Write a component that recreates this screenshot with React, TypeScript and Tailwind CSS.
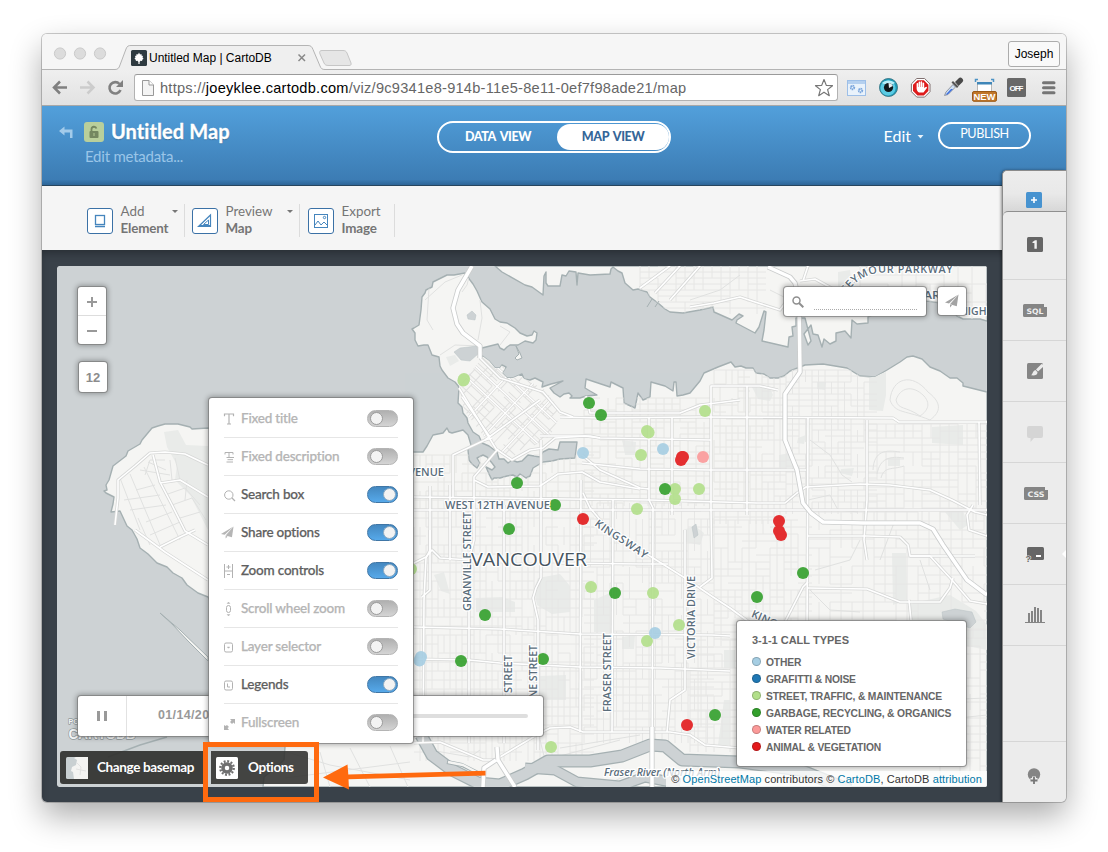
import React from "react";

/* ---------- Map geometry ---------- */

const MAIN_LAND =
  "M414 452L423 452L427 446L433 435L443 433L447 428L449 432L452 433L463 430L468 435L471 445L468 450L469 460L472 464L477 468L480 463L477 458L483 455L487 457L492 463L495 467L492 470L486 467L489 474L492 480L494 478L500 478L507 476L513 475L517 477L520 474L526 478L530 476L533 468L543 462L552 461L560 459L575 458L577 442L560 442L558 450L549 449L543 452L540 457L528 455L522 461L517 462L512 460L508 463L504 459L499 459L497 452L489 446L482 443L479 436L473 432L468 423L467 418L463 413L462 407L458 403L459 387L455 382L448 378L442 370L440 366L439 357L432 355L428 345L424 345L418 346L415 340L415 333L412 329L414 328L419 325L421 310L422 297L425 293L426 290L432 287L433 282L447 275L454 275L465 273L470 280L473 284L477 291L481 300L482 302L490 309L495 319L500 322L507 323L515 328L520 333L527 336L532 335L534 331L537 333L536 340L533 343L525 341L518 345L510 345L507 347L504 350L500 348L498 344L490 346L482 348L481 355L489 361L495 368L500 368L502 365L506 367L502 373L507 378L513 378L522 374L524 379L530 380L535 378L543 382L542 387L551 384L563 381L550 388L554 393L560 397L564 394L569 393L572 396L570 398L580 398L586 396L597 395L590 391L585 388L586 379L610 387L611 382L623 388L624 403L635 408L638 393L643 400L650 397L651 382L665 386L673 391L674 382L676 382L677 396L683 395L690 393L695 387L700 381L704 373L718 367L731 362L735 367L741 366L746 368L753 368L756 373L764 374L770 378L778 378L784 376L790 371L800 367L805 365L823 364L847 368L860 376L875 377L887 370L900 362L907 357L913 356L922 359L930 367L940 371L950 378L957 378L963 383L963 386L975 389L987 392L987 787L263 787L264 777L273 770L284 760L285 747L285 740L208 597L198 593L187 585L182 578L173 573L167 567L157 563L148 554L140 548L137 539L132 530L127 526L120 511L111 512L113 504L114 497L106 493L104 491L107 490L106 485L109 480L113 466L126 456L128 451L140 444L142 440L152 428L158 426L165 424L178 424L190 427L192 429L208 428L250 440Z";

const NORTH_LAND =
  "M495 266L502 272L525 285L532 287L543 295L544 276L546 272L546 283L548 286L560 286L562 275L566 276L569 271L576 272L577 285L578 273L590 275L610 274L611 269L613 267L618 271L622 273L625 283L633 290L638 289L647 292L650 297L658 303L665 309L670 312L683 313L700 310L713 307L714 312L732 320L739 314L743 316L737 320L736 323L755 333L759 327L764 311L766 312L764 330L762 341L788 347L789 337L793 336L792 327L796 326L796 318L805 318L811 341L808 345L804 334L811 325L813 334L818 335L822 347L824 339L830 344L836 341L836 333L845 331L851 338L852 320L857 324L868 323L868 317L890 306L927 301L948 304L957 316L963 319L980 319L987 321L987 266Z";

const LAND = MAIN_LAND + NORTH_LAND;

const PARKS = [
  "M164 432L178 430L186 445L208 446L208 530L190 495L175 480L177 465L167 447Z",
  "M446 357L455 355L459 361L450 366Z",
  "M538 578L560 574L570 586L570 612L552 614L537 605L534 590Z",
  "M476 598L502 597L515 602L515 612L476 612Z",
  "M540 676L566 675L566 700L540 700Z",
  "M594 600L612 592L612 632L594 632Z",
  "M622 637L635 635L634 649L622 649Z",
  "M434 575L444 572L450 594L441 591Z",
  "M752 387L770 388L773 395L770 401L758 399Z",
  "M869 378L886 372L886 395L883 411L869 410Z",
  "M932 427L963 425L963 445L932 443Z",
  "M779 455L790 453L793 468L779 468Z",
  "M798 438L806 435L804 444L797 443Z",
  "M817 382L826 382L825 390L817 389Z",
  "M888 458L900 458L900 466L888 466Z",
  "M841 469L854 468L852 476L840 473Z",
  "M892 553L906 553L907 600L893 605Z",
  "M909 604L950 595L976 611L987 625L987 650L938 640L910 625Z",
  "M945 512L962 508L968 525L960 530Z",
  "M724 700L730 700L730 745L718 745Z",
  "M683 530L695 526L704 533L700 545L685 542Z",
  "M838 272L850 270L852 290L838 292Z",
  "M622 440L636 442L635 455L625 455Z",
  "M724 650L735 650L735 668L724 668Z",
];

const MAJOR = [
  "M414 497L650 500L757 503L785 503L797 493L806 487L860 484L890 485L930 490L952 500L975 512L987 515",
  "M414 510L987 510",
  "M430 486L430 550L426 558L424 600L423 743",
  "M450 485L450 560",
  "M453 497L453 455L485 440L492 438",
  "M469 743L469 560L474 540L474 477L498 449",
  "M504 743L504 505",
  "M538 750L538 620L533 598L536 588L541 578L541 440",
  "M580 732L581 480",
  "M612 732L613 500",
  "M652 787L653 508L649 500L649 418",
  "M672 500L672 418M672 440L672 515",
  "M685 530L685 690L670 700L667 732",
  "M711 510L711 386L760 386L778 390",
  "M747 515L747 386",
  "M807 640L808 418",
  "M867 560L864 540L867 500L867 420",
  "M980 505L979 422",
  "M560 417L600 418L700 417L893 418L899 422L987 422",
  "M540 436L590 436L600 438L711 440",
  "M582 463L640 469L711 470L806 470",
  "M582 455L600 470L640 488L649 489",
  "M414 627L500 629L580 634L712 635L730 636",
  "M414 659L469 660L500 663L580 667L660 668L730 671",
  "M414 563L426 557L432 550L440 558L470 560M560 563L640 564L668 564",
  "M414 743L440 742L483 760L495 760L540 733L550 728L570 727L583 732L670 732L690 735L705 745L740 748",
  "M583 493L590 508L602 522L645 553L685 578L713 597L730 608L760 630",
  "M485 440L540 400M459 388L496 449L512 460L530 450L543 448L555 438L585 436L600 438",
  "M462 397L490 437M480 358L500 378L543 392L560 412L573 417",
  "M474 480L488 487L540 486L558 474L582 472L600 482L640 489",
  "M586 396L590 413L680 413L700 405L740 400",
  "M700 587L712 578L711 510",
  "M783 626L803 587L808 582",
  "M808 536L867 536L900 537L908 545L910 556L975 556M808 588L867 589L880 594L900 602L940 602L950 588L953 578",
  "M910 556L930 556L952 580L970 601L987 604M909 600L911 620",
  "M690 307L714 303L740 297L755 302L780 310L786 302",
  "M640 288L670 266M655 293L680 266M670 300L700 266",
  "M800 281L815 279L835 290L850 285L870 266M803 281L808 266",
  "M973 505L967 515L969 530L987 536",
  "M115 525L118 498L118 480L135 466L150 453L165 452L185 454L208 465",
  "M153 455L160 482L172 505L185 531L208 545M160 483L180 480L208 497",
  "M422 597L430 590L430 530",
  "M135 530L165 552L208 580M160 547L180 537L195 530",
];

const HIGHWAYS = [
  "M768 267L790 277L795 283L799 300L800 372L785 394L785 440L797 470L803 503L811 513L823 522L863 523L920 523L933 529L943 545L967 580L987 595",
  "M472 266L458 290L453 308L457 324L463 333L480 346L480 358",
  "M497 747L498 760L515 787M483 787L484 768L496 760",
  "M652 727L652 787",
];

const DETAIL_ROADS = [
  "M429 288L427 320L433 330M440 355L455 345L480 346M425 300L445 282L462 275",
  "M480 300L482 318L478 340M500 326L510 332L500 345M470 273L467 285L462 292",
  "M890 400C892 378 912 372 928 392C945 405 938 414 930 420C906 410 895 414 890 400Z",
  "M896 400C900 388 912 384 924 396C932 405 926 412 920 416C906 406 898 410 896 400Z",
  "M873 470C874 450 886 450 900 452M877 474C880 458 890 456 904 458M881 478C884 466 892 470 904 466",
  "M810 440L830 455L842 475L852 482M808 500L830 495L838 510L858 512",
  "M690 300L720 290L740 275M770 290L790 300M830 290L835 300M890 302L930 300",
  "M280 750L330 765L410 780M320 752L330 787M350 748L370 787M390 746L408 787M285 778L410 762",
  "M430 750L470 757L480 750M540 740L545 760L620 740M560 748L640 735",
  "M810 590L830 610L860 612M815 570L850 560L860 540M880 560L895 520M920 560L930 590",
  "M936 700L987 698M940 720L987 715M945 690L950 740M600 787L640 770M750 770L820 775",
  "M145 475L150 460L165 460M148 462L166 470M140 470L170 475M136 490L155 485M124 500L160 495M130 510L166 505",
  "M170 460L172 480M175 458L180 480M120 478L140 530M130 474L160 545M144 467L180 540M185 500L187 480",
  "M165 495L185 488L200 505M172 505L192 498L206 520M180 518L200 512M146 522L172 512M150 535L180 522M138 518L150 545",
];

function noise(n: number) {
  const s = Math.sin(n * 127.1 + 11.7) * 43758.5453;
  return s - Math.floor(s);
}

type Block = [number, number, number, number, number, number];
/* x, y, width, height, column step, row step */
const BLOCKS: Block[] = [
  [414, 455, 170, 300, 6, 9],
  [584, 398, 128, 105, 8, 6],
  [584, 503, 128, 230, 6.5, 8],
  [714, 370, 70, 150, 6, 7],
  [714, 520, 90, 125, 7, 7],
  [786, 370, 82, 135, 6.5, 6],
  [868, 424, 114, 86, 9, 7],
  [808, 512, 178, 118, 11, 9],
  [940, 630, 47, 140, 10, 8],
  [690, 640, 50, 110, 8, 7],
  [640, 266, 125, 45, 9, 6],
  [860, 266, 127, 50, 14, 9],
];

function streets(b: Block, seed: number) {
  const [x, y, w, h, cs, rs] = b;
  let d = "";
  let k = seed * 1000;
  for (let cx = x; cx < x + w; cx += cs) {
    for (let cy = y; cy < y + h; cy += rs * 2) {
      k++;
      if (noise(k) > 0.25) d += `M${cx.toFixed(1)} ${cy.toFixed(1)}v${rs * 2}`;
    }
  }
  for (let cy = y; cy < y + h; cy += rs) {
    for (let cx = x; cx < x + w; cx += cs * 2) {
      k++;
      if (noise(k) > 0.22) d += `M${cx.toFixed(1)} ${cy.toFixed(1)}h${cs * 2}`;
    }
  }
  return d;
}

const GRID = BLOCKS.map((b, i) => streets(b, i + 1)).join("");
const DOWNTOWN = streets([-60, -60, 120, 120, 8, 7], 31);
const DOWNTOWN_AVENUES = "M-60 -21H60M-60 -7H60M-60 7H60M-24 -60V60M0 -60V60M24 -60V60";

const BLUE = "#a6cee3";
const LIGHT = "#b2df8a";
const GREEN = "#33a02c";
const PINK = "#fb9a99";
const RED = "#e31a1c";

const CALLS: [number, number, string][] = [
  [464, 379, LIGHT], [463.4, 380.4, LIGHT], [589, 403, GREEN], [601, 415, GREEN], [647, 431, LIGHT], [648.6, 432.6, LIGHT],
  [641, 455, LIGHT], [705, 411, LIGHT], [663, 449, BLUE], [583, 453, BLUE], [703, 457, PINK],
  [682, 457, RED], [681, 460, RED], [683, 457, RED], [675, 489, LIGHT], [675, 499, LIGHT], [665, 489, GREEN],
  [699, 489, LIGHT], [637, 509, LIGHT], [583, 519, RED], [517, 483, GREEN], [555, 505, GREEN], [509, 529, GREEN],
  [591, 587, LIGHT], [615, 593, GREEN], [653, 593, LIGHT], [679, 625, LIGHT], [647, 641, LIGHT],
  [655, 633, BLUE], [485, 615, GREEN], [461, 661, GREEN], [543, 659, GREEN], [421, 657, BLUE], [419.5, 660.5, BLUE],
  [551, 747, LIGHT], [687, 725, RED], [715, 715, GREEN], [779, 521, RED], [779, 531, RED],
  [781, 535, RED], [803, 573, GREEN], [757, 597, GREEN], [411, 569, LIGHT],
];

function Label({ x, y, r = 0, size = 11, len, children }: { x: number; y: number; r?: number; size?: number; len?: number; children: string }) {
  return (
    <text
      x={x}
      y={y}
      fontSize={size}
      textLength={len}
      lengthAdjust="spacingAndGlyphs"
      transform={r ? `rotate(${r} ${x} ${y})` : undefined}
    >
      {children}
    </text>
  );
}

function CityMap() {
  return (
    <svg className="block h-full w-full rounded-[2px]" viewBox="57 266 930 521">
      <defs>
        <clipPath id="land">
          <path d={LAND} />
        </clipPath>
        <clipPath id="core">
          <path d="M459 386L484 356L545 390L562 412L550 436L512 459L488 442L464 410Z" />
        </clipPath>
        <path id="kingsway" d="M594 525L606 534Q626 545 648 562" />
        <path id="parkway" d="M846 294Q860 273 884 272.500L987 272.500" />
        <path id="kingsway2" d="M751 617Q765 622 785 634" />
      </defs>
      <rect x="57" y="266" width="930" height="521" fill="#cdd2d4" />
      <path d={LAND} fill="#f5f5f3" stroke="#a5b0b2" strokeWidth="1.4" strokeLinejoin="round" />
      <g clipPath="url(#land)">
        <g fill="#e9ebe9">
          {PARKS.map((d) => (
            <path key={d} d={d} />
          ))}
        </g>
        <path d={GRID} stroke="#e5e5e4" strokeWidth="0.9" fill="none" />
        <g clipPath="url(#core)">
          <path d="M455 350h115v115h-115z" fill="#f5f5f3" />
          <g transform="translate(510 408) rotate(43)" fill="none">
            <path d={DOWNTOWN} stroke="#e0e0df" strokeWidth="1" />
            <path d={DOWNTOWN_AVENUES} stroke="#dcdcdb" strokeWidth="2.6" />
            <path d={DOWNTOWN_AVENUES} stroke="#fff" strokeWidth="1.3" />
          </g>
        </g>
        <g fill="none" stroke="#e0e1e0" strokeWidth="1">
          {DETAIL_ROADS.map((d) => (
            <path key={d} d={d} />
          ))}
        </g>
      </g>

      {/* Lakes, reservoirs and harbour details */}
      <g fill="#cdd2d4" stroke="#b9c2c4" strokeWidth="0.5">
        <path d="M454 352L460 348L477 346L478 354L470 361L461 360Z" />
        <path d="M467 315L472 311L476 315L475 320L468 319Z" />
        <path d="M942 612L955 609L972 612L976 622L970 628L958 624L943 619Z" />
        <path d="M692 527L696 524L698 535L694 538Z" />
      </g>
      <path d="M516 346L520 353L522 358L517 360L515 358L519 354Z" fill="#f5f5f3" stroke="#a5b0b2" />
      <g stroke="#a5b0b2" fill="none" strokeWidth="1">
        <path d="M160 613L180 630L208 657L208 661L188 641L172 624Z" fill="#f5f5f3" />
        <path d="M108 757L140 745L167 737" strokeWidth="1.4" />
        <path d="M647 307L652 299M655 307L659 301" />
      </g>

      {/* River */}
      <g fill="none" strokeLinejoin="round">
        <g stroke="#a5b0b2">
          <path d="M421 735L432 755L452 770L478 783L500 785L525 774L548 761L590 761L622 756L650 745L665 746L682 760L740 762L800 770L850 790" strokeWidth="13" />
          <path d="M525 768L555 770L577 782L620 786L645 777L680 784" strokeWidth="11" />
        </g>
        <g stroke="#cdd2d4">
          <path d="M421 735L432 755L452 770L478 783L500 785L525 774L548 761L590 761L622 756L650 745L665 746L682 760L740 762L800 770L850 790" strokeWidth="10.5" />
          <path d="M525 768L555 770L577 782L620 786L645 777L680 784" strokeWidth="8.5" />
        </g>
        <path d="M447 762L462 765L482 775" stroke="#a5b0b2" strokeWidth="4" />
        <path d="M448 762L463 765L480 774" stroke="#f5f5f3" strokeWidth="2.4" />
      </g>

      {/* Arterials and highways */}
      <g fill="none" strokeLinejoin="round">
        <g stroke="#d7d8d7" strokeWidth="3.2">
          {MAJOR.map((d) => (
            <path key={d} d={d} />
          ))}
        </g>
        <g stroke="#ffffff" strokeWidth="1.6">
          {MAJOR.map((d) => (
            <path key={d} d={d} />
          ))}
        </g>
        <g stroke="#cbcdcd" strokeWidth="5.2">
          {HIGHWAYS.map((d) => (
            <path key={d} d={d} />
          ))}
        </g>
        <g stroke="#ffffff" strokeWidth="3.5">
          {HIGHWAYS.map((d) => (
            <path key={d} d={d} />
          ))}
        </g>
      </g>

      <g opacity="0.9">
        {CALLS.map(([x, y, c], i) => (
          <circle key={i} cx={x} cy={y} r="6" fill={c} />
        ))}
      </g>

      <g
        fill="#5a6d7b"
        stroke="#ffffff"
        strokeWidth="2.4"
        strokeLinejoin="round"
        paintOrder="stroke"
        className="font-['Open_Sans',sans-serif] font-semibold"
      >
        <Label x={371} y={475.5} len={73}>12TH AVENUE</Label>
        <Label x={445} y={509} len={105}>WEST 12TH AVENUE</Label>
        <Label x={470.5} y={611} r={-90} len={99}>GRANVILLE STREET</Label>
        <Label x={511.5} y={693} r={-90} len={38}>STREET</Label>
        <Label x={537} y={718} r={-90} len={73}>MAINE STREET</Label>
        <Label x={611} y={712} r={-90} len={79}>FRASER STREET</Label>
        <Label x={695} y={659} r={-90} len={83}>VICTORIA DRIVE</Label>
        <text fontSize="10.8">
          <textPath href="#kingsway" textLength="61">KINGSWAY</textPath>
        </text>
        <text fontSize="10.8">
          <textPath href="#kingsway2">KINGSWAY</textPath>
        </text>
        <text fontSize="10.8">
          <textPath href="#parkway" textLength="114">SEYMOUR PARKWAY</textPath>
        </text>
        <Label x={916} y={299} len={32}>PARK</Label>
        <Label x={960} y={315} len={26.5}>HIGH</Label>
        <text x="471" y="566" fontSize="17.5" fill="#47555f" textLength="116" lengthAdjust="spacingAndGlyphs" className="font-medium">
          VANCOUVER
        </text>
        <text x="604" y="775.5" fontSize="10" fontStyle="italic" textLength="116" lengthAdjust="spacingAndGlyphs">
          Fraser River (North Arm)
        </text>
      </g>
    </svg>
  );
}

/* ---------- Browser chrome ---------- */

function TabStrip() {
  return (
    <div className="relative h-[36px] shrink-0 bg-[#f6f6f6]">
      <svg className="absolute left-0 top-0 h-[36px] w-[1024px]" viewBox="0 0 1024 36" fill="none">
        <path d="M0 35.5H73C76 35.5 77 34 78 31L84 15C85 12 86.500 11.500 89 11.500H266C269 11.500 270 13 271 15.500L278 32C279 34.500 280 35.500 283 35.500H1024V36H0Z" fill="#efefef" />
        <path d="M0 35.5H73C76 35.5 77 34 78 31L84 15C85 12 86.500 11.500 89 11.500H266C269 11.500 270 13 271 15.500L278 32C279 34.500 280 35.500 283 35.500H1024" stroke="#b4b4b4" />
        <path d="M278 20C277 17.500 278 16.500 280 16.500H301C303 16.500 304 17 305 19L309 29C309.500 31 308.500 31.500 307 31.500H287C284 31.500 283 31 282 29Z" fill="#e6e6e6" stroke="#c6c6c6" />
        <g fill="#dcdcdc" stroke="#cacaca">
          <circle cx="18" cy="19.500" r="5.600" />
          <circle cx="38" cy="19.500" r="5.600" />
          <circle cx="58" cy="19.500" r="5.600" />
        </g>
        <rect x="89" y="16" width="16" height="16" rx="1.500" fill="#2e3a40" />
        <path d="M97 18.500L98 20.500L99.500 20L99.500 21.500L101 22L100.500 23.500L101.500 24.500L100.500 25.500L100 27L98.500 26.800L97.600 28V30H96.400V28L95.500 26.800L94 27L93.500 25.500L92.500 24.500L93.500 23.500L93 22L94.500 21.500L94.500 20L96 20.500Z" fill="#fff" />
        <path d="M256.500 20.500L263 27M263 20.500L256.500 27" stroke="#888" strokeWidth="1.500" />
      </svg>
      <div className="relative flex h-full items-center">
        <span className="ml-[107px] mt-[12px] w-[124px] whitespace-nowrap font-['Liberation_Sans',sans-serif] text-[12px] tracking-[-0.02px] text-black">
          Untitled Map | CartoDB
        </span>
        <span className="ml-auto mr-[6px] mt-[3px] flex h-[26px] w-[52px] items-center justify-center rounded-[3px] border border-[#acacac] bg-[#f9f9f9] font-['Liberation_Sans',sans-serif] text-[12px] text-black">
          Joseph
        </span>
      </div>
    </div>
  );
}

function Extensions() {
  return (
    <svg className="h-[35px] w-[228px]" viewBox="838 70 228 35" fill="none">
      <rect x="847.500" y="80.500" width="18" height="15" fill="#e9f2fb" stroke="#9dbfe8" />
      <path d="M848 81h17v3h-17z" fill="#b5d0ef" />
      <circle cx="852.500" cy="87.500" r="1.700" stroke="#7aa5dc" strokeWidth="2" strokeDasharray="1.300 0.500" />
      <circle cx="860.500" cy="90.500" r="1.700" stroke="#7aa5dc" strokeWidth="2" strokeDasharray="1.300 0.500" />
      <circle cx="888.500" cy="87.500" r="9.200" fill="#1f9cb8" />
      <circle cx="888.500" cy="87.500" r="9" stroke="#40717e" strokeWidth="0.800" />
      <circle cx="888" cy="88" r="7.600" fill="#5bcbe4" />
      <path d="M882 83C885 79.500 892 79.500 895 83C891 85 886 85 882 83Z" fill="#b7effa" />
      <circle cx="888.500" cy="87.500" r="4.600" fill="#10181c" />
      <path d="M888.500 82.900A4.600 4.600 0 0 1 892.800 86L889 88Z" fill="#e7eef0" />
      <path d="M916.800 78.500h7.800l5.400 5.400v7.800l-5.400 5.400h-7.800l-5.400-5.400v-7.800Z" fill="#fff" stroke="#807070" strokeWidth="1" />
      <path d="M917.500 80.200h6.400l4.500 4.500v6.400l-4.500 4.500h-6.400l-4.500-4.500v-6.400Z" fill="#dd1b1b" />
      <path d="M916.600 88.500V83.800a.8.8 0 0 1 1.600 0V87h.4V82.300a.8.8 0 0 1 1.600 0V87h.4V82a.8.8 0 0 1 1.600 0V87h.4V83.300a.8.8 0 0 1 1.600 0V88L925.600 87a.8.8 0 0 1 1.100 1.200L923.500 92.500H919C917.500 91.500 916.600 90 916.600 88.500Z" fill="#fff" />
      <path d="M944.500 95.500L946 92L953 84.500L955.500 87L948 94.500Z" fill="#cfe0f5" stroke="#898f99" strokeWidth="0.900" />
      <path d="M945.500 94.800L951 89L953 89L948 94.200Z" fill="#3c6fe0" />
      <path d="M951.500 82.500L953 81L958.500 86.500L957 88Z" fill="#555" />
      <path d="M955 82L958.500 78.500A2.600 2.600 0 0 1 962.300 82.200L958.500 86Z" fill="#4a4a4a" />
      <path d="M975.500 82V79.500H978M991 79.500H993.500V82" stroke="#4d93c5" strokeWidth="1.500" />
      <rect x="977.500" y="82.500" width="14" height="9" fill="#fff" stroke="#b7b7b7" />
      <path d="M977 82h15v2.500h-15z" fill="#3f86b8" />
      <rect x="972.500" y="91.500" width="24" height="9.800" rx="1.500" fill="#c0762a" stroke="#9b5a17" />
      <text x="984.500" y="100" textAnchor="middle" fontSize="9.500" fontWeight="700" fill="#fff" className="font-['Liberation_Sans',sans-serif]" textLength="22" lengthAdjust="spacingAndGlyphs">NEW</text>
      <rect x="1007" y="78" width="19" height="19" rx="1.500" fill="#686868" />
      <text x="1016.500" y="90.800" textAnchor="middle" fontSize="8" fontWeight="700" fill="#fff" className="font-['Liberation_Sans',sans-serif]" textLength="14">OFF</text>
      <path d="M1043.500 82.700h10.500M1043.500 87.700h10.500M1043.500 92.700h10.500" stroke="#757575" strokeWidth="3" strokeLinecap="round" />
    </svg>
  );
}

function AddressBar() {
  return (
    <div className="flex h-[36px] shrink-0 items-start border-b border-[#a8a8a8] bg-gradient-to-b from-[#efefef] to-[#e2e2e2]">
      <svg className="h-[35px] w-[92px]" viewBox="42 70 92 35" fill="none">
        <path d="M67 87.500H54M60 81.500L54 87.500L60 93.500" stroke="#808080" strokeWidth="2.500" />
        <path d="M80 87.500H93.500M87.500 81.500L93.500 87.500L87.500 93.500" stroke="#cccccc" strokeWidth="2.500" />
        <path d="M119.500 84A5.700 5.700 0 1 0 120.500 90" stroke="#808080" strokeWidth="2.600" />
        <path d="M123 80V87H116Z" fill="#808080" />
      </svg>
      <div className="mt-[4px] flex h-[27px] w-[704px] items-center rounded-[3px] border border-[#b2b2b2] border-t-[#9a9a9a] bg-white">
        <svg className="ml-[6px] h-[18px] w-[14px]" viewBox="0 0 14 18" fill="none">
          <path d="M1.500 1.500H8L12.500 6V16.500H1.500Z" fill="#f4f4f4" stroke="#999" />
          <path d="M8 1.500V6H12.500" fill="#fff" stroke="#999" />
        </svg>
        <span className="ml-[5px] mt-[1px] whitespace-nowrap font-['Liberation_Sans',sans-serif] text-[14.6px] leading-none tracking-[0.25px] text-[#666]">
          https://<span className="text-black">joeyklee.cartodb.com</span>/viz/9c9341e8-914b-11e5-8e11-0ef7f98ade21/map
        </span>
        <svg className="ml-auto mr-[3px] h-[20px] w-[20px]" viewBox="0 0 20 20" fill="none">
          <path d="M10 1.500L12.300 7.400L18.500 7.700L13.600 11.600L15.300 17.700L10 14.200L4.700 17.700L6.400 11.600L1.500 7.700L7.700 7.400Z" stroke="#777" strokeWidth="1.200" strokeLinejoin="round" />
        </svg>
      </div>
      <Extensions />
    </div>
  );
}

/* ---------- Application header ---------- */

function Header() {
  return (
    <header className="flex h-[80px] shrink-0 items-start border-b border-[#27455e] bg-gradient-to-b from-[#519ed9] from-5% via-[#3c7cb4] via-93% to-[#2d6597] font-[Lato,sans-serif]">
      <svg className="ml-[16px] mt-[19px] h-[14px] w-[16px]" viewBox="0 0 16 14">
        <path d="M1 6L6.500 1.500V4.500H14.500V13H12V7.500H6.500V10.500Z" fill="#a3cbea" />
      </svg>
      <div className="ml-[10px] mt-[16px] flex h-[20px] w-[20px] items-center justify-center rounded-[3px] bg-[#b9cf9b]">
        <svg className="h-[14px] w-[12px]" viewBox="0 0 12 14" fill="none">
          <path d="M3.500 6V4A2.500 2.500 0 0 1 8.400 3.600" stroke="#748760" strokeWidth="1.800" />
          <rect x="1.500" y="6" width="9" height="7" rx="1" fill="#748760" />
          <path d="M6 8v3" stroke="#a9bf8c" strokeWidth="1.200" />
        </svg>
      </div>
      <div className="-ml-[19px] mt-[11px] w-[300px]">
        <h1 className="ml-[26px] whitespace-nowrap text-[20px] font-bold leading-[28px] tracking-[0.08px] text-white [-webkit-text-stroke:0.3px] [text-shadow:0_1px_1px_rgba(0,0,0,0.25)]">
          Untitled Map
        </h1>
        <p className="mt-[2px] text-[15px] leading-[18px] tracking-[-0.23px] text-[#9ac5e8]">Edit metadata...</p>
      </div>
      <div className="ml-[52px] mt-[15px] flex h-[32px] w-[234px] shrink-0 items-center rounded-full border-2 border-white text-[12.5px] font-black tracking-[-0.4px] [word-spacing:2px]">
        <span className="w-[118px] text-center text-white">DATA VIEW</span>
        <span className="flex h-[26px] w-[112px] items-center justify-center rounded-full bg-white text-[#356698]">MAP VIEW</span>
      </div>
      <div className="ml-auto mr-[35px] mt-[16px] flex items-center">
        <span className="text-[16px] leading-[27px] text-white">Edit</span>
        <svg className="ml-[6px] mt-[2px] h-[4px] w-[7px]" viewBox="0 0 7 4">
          <path d="M0.500 0H6.500L3.500 3.500Z" fill="#e8f2fa" />
        </svg>
        <button className="ml-[14px] h-[27px] w-[93px] rounded-full border-2 border-white pb-[2px] text-[12.6px] leading-none tracking-[-0.4px] text-white">
          PUBLISH
        </button>
      </div>
    </header>
  );
}

function ToolButton({ top, bottom, caret, width, textWidth, children }: { top: string; bottom: string; caret?: boolean; width: string; textWidth: string; children: React.ReactNode }) {
  return (
    <div className={`flex h-[33px] items-start border-r border-[#dcdcdc] ${width}`}>
      <div className="mt-[4px] flex h-[26px] w-[26px] shrink-0 items-center justify-center rounded-[3px] border border-[#3b71a6] bg-white">
        <svg className="h-[16px] w-[16px]" viewBox="0 0 16 16" fill="none" stroke="#4585bd">
          {children}
        </svg>
      </div>
      <div className={`ml-[8px] text-[13.4px] leading-[17px] text-[#757575] ${textWidth}`}>
        <div className="-mt-[1px] -ml-[0.5px]">{top}</div>
        <div className="-ml-[0.5px] font-bold tracking-[-0.15px]">{bottom}</div>
      </div>
      {caret && (
        <svg className="mt-[6px] h-[4px] w-[6px]" viewBox="0 0 6 4">
          <path d="M0 0H6L3 3Z" fill="#777" />
        </svg>
      )}
    </div>
  );
}

function Toolbar() {
  return (
    <div className="flex h-[64px] shrink-0 items-start gap-[7px] bg-[#f5f5f5] pl-[45px] pt-[18px] font-[Lato,sans-serif]">
      <ToolButton top="Add" bottom="Element" caret width="w-[98px]" textWidth="w-[51px]">
        <rect x="3.500" y="2.500" width="9" height="9" strokeWidth="1.300" />
        <path d="M3 13.500h10" strokeWidth="1.300" />
      </ToolButton>
      <ToolButton top="Preview" bottom="Map" caret width="w-[108px]" textWidth="w-[61px]">
        <path d="M13.500 2V13.500H1.500Z" strokeWidth="1.200" />
        <path d="M11.500 7V11.500H6.500Z" />
        <path d="M3 12.500h10" />
      </ToolButton>
      <ToolButton top="Export" bottom="Image" width="ml-[1px] w-[87px]" textWidth="w-[45px]">
        <rect x="1.500" y="1.500" width="13" height="13" />
        <path d="M2 12L5 8L8 12L11 9L14 12" />
        <circle cx="11.500" cy="4.500" r="1.200" />
      </ToolButton>
    </div>
  );
}

/* ---------- Side panel ---------- */

function SideTab({ h, children }: { h: string; children?: React.ReactNode }) {
  return (
    <div className={`flex shrink-0 items-center justify-center border-b border-[#d6d6d6] ${h}`}>{children}</div>
  );
}

function TagIcon({ children }: { children: string }) {
  return (
    <svg className="h-[13px] w-[24px]" viewBox="0 0 24 13">
      <path d="M1.500 0H21V3H24V11.500A1.500 1.500 0 0 1 22.500 13H1.500A1.500 1.500 0 0 1 0 11.500V1.500A1.500 1.500 0 0 1 1.500 0Z" fill="#858585" />
      <text x="12" y="9.500" textAnchor="middle" fontSize="7.500" fontWeight="700" textLength="17" lengthAdjust="spacingAndGlyphs" fill="#f0f0f0" className="font-['DejaVu_Sans',sans-serif]">
        {children}
      </text>
    </svg>
  );
}

function SidePanel() {
  return (
    <aside className="absolute right-0 top-[136px] flex h-[632px] w-[64px] flex-col rounded-tl-[5px] border-l border-t border-[#8b8b8b] bg-[#ececec] shadow-[-1px_0_3px_rgba(0,0,0,0.4)]">
      <div className="flex h-[45px] shrink-0 items-start justify-center rounded-tl-[5px] bg-gradient-to-b from-[#ededed] via-[#e9e9e9] to-[#d2d2d2] pt-[21px]">
        <svg className="mr-[2px] h-[16px] w-[16px]" viewBox="0 0 16 16">
          <rect width="16" height="16" rx="1.500" fill="#4793d0" />
          <path d="M8 5v6M5 8h6" stroke="#fff" strokeWidth="1.600" />
        </svg>
      </div>
      <div className="-mt-[5px] flex grow flex-col rounded-tl-[5px] border-t border-[#8f8f8f] bg-[#ececec]">
        <SideTab h="h-[68px]">
          <svg className="mt-[-3px] h-[15px] w-[16px]" viewBox="0 0 16 15">
            <rect width="16" height="15" rx="1.500" fill="#666" />
            <path d="M5.500 5L8 3.200H9.800V11.800H7.400V6H5.500Z" fill="#f2f2f2" />
          </svg>
        </SideTab>
        <SideTab h="h-[61px]"><TagIcon>SQL</TagIcon></SideTab>
        <SideTab h="h-[61px]">
          <svg className="h-[16px] w-[16px]" viewBox="0 0 16 16">
            <rect width="16" height="16" rx="1.500" fill="#858585" />
            <path d="M16 1.500L14.500 1L9 6.500L11 8.500L16 4Z" fill="#ececec" />
            <path d="M8.500 7L10.500 9.300C10.500 12 8 12.800 4 12.300C6 11 5.500 8 8.500 7Z" fill="#ececec" />
          </svg>
        </SideTab>
        <SideTab h="h-[61px]">
          <svg className="mt-[3px] h-[16px] w-[16px]" viewBox="0 0 16 16">
            <path d="M2 0H14A2 2 0 0 1 16 2V10A2 2 0 0 1 14 12H7L3.500 16V12H2A2 2 0 0 1 0 10V2A2 2 0 0 1 2 0Z" fill="#d5d5d5" />
          </svg>
        </SideTab>
        <SideTab h="h-[61px]"><span className="ml-[2px]"><TagIcon>CSS</TagIcon></span></SideTab>
        <SideTab h="h-[61px] relative">
          <svg className="h-[16px] w-[20px]" viewBox="0 0 20 16">
            <rect x="2" y="1" width="17" height="13" rx="1.500" fill="#666" />
            <path d="M11 9h5v2h-5z" fill="#fff" />
            <text x="0.500" y="15.500" fontSize="9" fontWeight="700" fill="#666" stroke="#ececec" strokeWidth="1.200" paintOrder="stroke" className="font-['Liberation_Sans',sans-serif]">?</text>
          </svg>
          <svg className="absolute right-0 top-[26px] h-[8px] w-[4px]" viewBox="0 0 4 8">
            <path d="M4 0L0 4L4 8Z" fill="#fff" />
          </svg>
        </SideTab>
        <SideTab h="h-[61px]">
          <svg className="h-[16px] w-[20px]" viewBox="0 0 20 16" stroke="#858585" fill="none">
            <path d="M0 15.500H20" />
            <path d="M4 15V6M7 15V4M10 15V0M13 15V1M16 15V3" strokeWidth="2" />
          </svg>
        </SideTab>
        <SideTab h="h-[96px]" />
        <div className="flex grow items-center justify-center">
          <svg className="mt-[7px] mr-[2px] h-[16px] w-[14px]" viewBox="0 0 14 16">
            <circle cx="7" cy="6.500" r="6.200" fill="#858585" />
            <path d="M7 8.500v7.500M3.500 12h7" stroke="#ececec" strokeWidth="4" />
            <path d="M7 9v7M3.500 12.500h7" stroke="#777" strokeWidth="1.800" />
          </svg>
        </div>
      </div>
    </aside>
  );
}

/* ---------- Map overlays ---------- */

const CARD = "bg-white rounded-[3px] shadow-[0_0_0_1px_rgba(120,120,120,0.65),0_0_5px_2px_rgba(0,0,0,0.28)]";

function ZoomControls() {
  return (
    <>
      <div className={`absolute left-[21px] top-[21px] flex h-[57px] w-[28px] flex-col ${CARD}`}>
        <div className="flex flex-1 items-center justify-center border-b border-[#ddd] pt-[1px]">
          <svg className="h-[10px] w-[10px]" viewBox="0 0 10 10"><path d="M5 0v10M0 5h10" stroke="#999" strokeWidth="2" /></svg>
        </div>
        <div className="flex flex-1 items-center justify-center pt-[1px]">
          <svg className="h-[10px] w-[10px]" viewBox="0 0 10 10"><path d="M0 5h10" stroke="#999" strokeWidth="2" /></svg>
        </div>
      </div>
      <div className={`absolute left-[22px] top-[96px] flex h-[30px] w-[28px] items-center justify-center pt-[1px] font-['Liberation_Sans',sans-serif] text-[13px] font-bold text-[#8c8c8c] ${CARD}`}>
        12
      </div>
    </>
  );
}

function Plane({ className, color }: { className: string; color: string }) {
  return (
    <svg className={className} viewBox="0 0 14 14">
      <path d="M13.500 0.500L0 8.500L4 9.500Z" fill={color} />
      <path d="M13.500 0.500L5 10.200L11.800 12.200Z" fill={color} />
      <path d="M5 10.600L5 13.500L7 11.300Z" fill={color} />
    </svg>
  );
}

function SearchAndShare() {
  return (
    <>
      <div className={`absolute left-[727px] top-[21px] flex h-[29px] w-[142px] items-center ${CARD}`}>
        <svg className="ml-[8px] h-[12px] w-[12px]" viewBox="0 0 12 12" fill="none" stroke="#8f8f8f">
          <circle cx="4.500" cy="4.500" r="3.500" strokeWidth="1.500" />
          <path d="M7 7L11.300 11.300" strokeWidth="2" />
        </svg>
        <div className="ml-[10px] mt-[16px] w-[103px] border-t border-dotted border-[#aaa]" />
      </div>
      <div className={`absolute left-[881px] top-[21px] flex h-[28px] w-[28px] items-center justify-center ${CARD}`}>
        <Plane className="h-[14px] w-[14px]" color="#a3a3a3" />
      </div>
    </>
  );
}

const LEGEND: [string, string][] = [
  ["OTHER", "bg-[#a6cee3]"],
  ["GRAFITTI & NOISE", "bg-[#1f78b4]"],
  ["STREET, TRAFFIC, & MAINTENANCE", "bg-[#b2df8a]"],
  ["GARBAGE, RECYCLING, & ORGANICS", "bg-[#33a02c]"],
  ["WATER RELATED", "bg-[#fb9a99]"],
  ["ANIMAL & VEGETATION", "bg-[#e31a1c]"],
];

function Legend() {
  return (
    <div className={`absolute left-[680px] top-[355px] h-[145px] w-[229px] pl-[15px] pt-[12px] font-['Liberation_Sans',sans-serif] font-bold text-[#666] ${CARD}`}>
      <h2 className="mb-[5px] text-[11px] leading-[15px] tracking-[0px]">3-1-1 CALL TYPES</h2>
      {LEGEND.map(([name, color]) => (
        <div key={name} className="flex h-[17px] items-center whitespace-nowrap text-[10.3px] tracking-[-0.18px]">
          <i className={`mr-[5px] h-[9px] w-[9px] rounded-full border border-black/20 ${color}`} />
          <span className="pt-[2px]">{name}</span>
        </div>
      ))}
    </div>
  );
}

function Timeline() {
  return (
    <>
      <svg className="absolute left-[9px] top-[448px] h-[28px] w-[76px]" viewBox="66 714 76 28">
        <g fill="#f5f6f6" stroke="#8f989b" strokeWidth="1.400" strokeLinejoin="round" paintOrder="stroke" fontWeight="700" className="font-['Liberation_Sans',sans-serif]">
          <text x="68.500" y="724" fontSize="7">POWERED BY</text>
          <text x="68.500" y="739" fontSize="14" textLength="67" lengthAdjust="spacingAndGlyphs">CARTODB</text>
        </g>
      </svg>
      <div className={`absolute left-[21px] top-[430px] flex h-[40px] w-[465px] items-center ${CARD}`}>
        <div className="flex h-full w-[49px] items-center justify-center gap-[4px] border-r border-[#e2e2e2]">
          <i className="h-[10px] w-[3px] bg-[#999]" />
          <i className="h-[10px] w-[3px] bg-[#999]" />
        </div>
        <span className="ml-[31px] w-[100px] pb-[1px] font-['Liberation_Sans',sans-serif] text-[12.5px] font-bold tracking-[0.35px] text-[#999]">01/14/2015</span>
        <div className="ml-[59px] h-[4px] w-[211px] rounded-full bg-[#dedede]" />
      </div>
    </>
  );
}

function OptionIcon({ name }: { name: string }) {
  if (name === "Share options") return <Plane className="-ml-[3px] h-[13px] w-[13px]" color="#b5b5b5" />;
  return (
    <svg className="h-[16px] w-[12px] overflow-visible" viewBox="0 0 12 16" fill="none" stroke="#b2b2b2">
      {name === "Fixed title" && (
        <path d="M0.500 5.200V3H9.500V5.200M5 3V13M3 13H7" strokeWidth="1.200" />
      )}
      {name === "Fixed description" && <path d="M1 5.500V3.500H9V5.500M5 3.500V8.500M2.500 8.500H10M3.500 10.700H9M2.500 13H9" />}
      {name === "Search box" && (
        <>
          <circle cx="4.800" cy="8" r="4.200" />
          <path d="M8 11L11 14" strokeWidth="1.300" />
        </>
      )}
      {name === "Zoom controls" && <path d="M0.500 1V15M8.500 1V15M0.500 8H8.500M4.500 2V6M2.500 4H6.500M3 11.500H6" />}
      {name === "Scroll wheel zoom" && (
        <>
          <rect x="2.500" y="4.500" width="4" height="7" rx="2" />
          <path d="M3.200 2.500L4.500 1L5.800 2.500ZM3.200 13.500L4.500 15L5.800 13.500Z" fill="#b2b2b2" strokeWidth="0.500" />
        </>
      )}
      {name === "Layer selector" && (
        <>
          <rect x="0.500" y="4" width="8" height="9" rx="1.500" />
          <path d="M3.300 8H5.700L4.500 9.300Z" fill="#b2b2b2" strokeWidth="0.500" />
        </>
      )}
      {name === "Legends" && (
        <>
          <rect x="0.500" y="4" width="8" height="9" rx="1.500" />
          <path d="M3.500 6.500V10H6" />
        </>
      )}
      {name === "Fullscreen" && (
        <g fill="#b2b2b2" stroke="none">
          <path d="M6 4H11V9L9.500 7.500L8 9L6 7L7.500 5.500Z" />
          <path d="M0 10L1.500 11L3 10L5 12L3.500 13L5 15H0Z" />
        </g>
      )}
    </svg>
  );
}

const OPTIONS: [string, boolean][] = [
  ["Fixed title", false],
  ["Fixed description", false],
  ["Search box", true],
  ["Share options", true],
  ["Zoom controls", true],
  ["Scroll wheel zoom", false],
  ["Layer selector", false],
  ["Legends", true],
  ["Fullscreen", false],
];

function Toggle({ on }: { on: boolean }) {
  return (
    <span
      className={`flex h-[17px] w-[31px] items-center rounded-full border px-[2px] ${
        on
          ? "justify-end border-[#3f76a6] bg-gradient-to-b from-[#4488c0] to-[#56a9ea]"
          : "justify-start border-[#b4b4b4] bg-gradient-to-b from-[#b0b0b0] to-[#d4d4d4]"
      }`}
    >
      <i className={`h-[13px] w-[13px] rounded-full border bg-[#f3f3f3] ${on ? "-mr-[1px] border-[#8aa9c2]" : "border-[#9b9b9b]"}`} />
    </span>
  );
}

function OptionsPanel() {
  return (
    <div className={`absolute left-[152px] top-[132px] h-[345px] w-[204px] px-[15px] pt-[2px] font-[Lato,sans-serif] ${CARD}`}>
      {OPTIONS.map(([name, on], i) => (
        <div key={name} className={`flex h-[38px] items-center border-b ${i < OPTIONS.length - 1 ? "border-[#e6e6e6]" : "border-transparent"}`}>
          <span className="flex w-[17px] shrink-0 items-center"><OptionIcon name={name} /></span>
          <span className={`whitespace-nowrap text-[13.5px] tracking-[-0.2px] ${on ? "text-[#5f5f5f]" : "text-[#b5b5b5]"} font-medium [-webkit-text-stroke:0.25px]`}>{name}</span>
          <span className="ml-auto"><Toggle on={on} /></span>
        </div>
      ))}
    </div>
  );
}

function BottomButtons() {
  return (
    <div className="absolute left-[3px] top-[485px] flex h-[33px] gap-[6px] font-[Lato,sans-serif] text-[13.5px] font-bold tracking-[-0.36px] text-white">
      <button className="flex w-[145px] items-center rounded-l-[3px] bg-[#30302e]/92 pl-[6px] text-left">
        <svg className="mr-[9px] h-[22px] w-[22px] shrink-0" viewBox="0 0 22 22">
          <rect width="22" height="22" rx="1.500" fill="#c9d0d2" />
          <path d="M8 1L11 3L10 8L6 10L5 14L7 15L8 22H22V0H10Z" fill="#f4f4f2" />
          <path d="M11 6L15 10L14 18M10 12L20 14" stroke="#e2e2e1" fill="none" />
        </svg>
        <span className="whitespace-nowrap">Change basemap</span>
      </button>
      <button className="flex w-[97px] items-center rounded-r-[3px] bg-[#30302e]/88 pl-[5px] text-left">
        <svg className="mr-[10px] h-[22px] w-[22px] shrink-0" viewBox="0 0 22 22">
          <rect width="22" height="22" rx="1.500" fill="#fff" />
          <circle cx="11" cy="11" r="4" fill="none" stroke="#6f6f6f" strokeWidth="3.500" />
          <circle cx="11" cy="11" r="6.700" fill="none" stroke="#6f6f6f" strokeWidth="2.400" strokeDasharray="1.900 1.608" />
        </svg>
        Options
      </button>
    </div>
  );
}

function Attribution() {
  return (
    <div className="absolute bottom-0 right-0 h-[16px] whitespace-nowrap bg-white/75 pl-[5px] pr-[5px] font-['Liberation_Sans',sans-serif] text-[11px] leading-[17px] tracking-[0.09px] text-[#333]">
      © <a className="text-[#0078a8]">OpenStreetMap</a> contributors © <a className="text-[#0078a8]">CartoDB</a>, CartoDB{" "}
      <a className="text-[#0078a8]">attribution</a>
    </div>
  );
}

function Annotation() {
  return (
    <>
      <div className="absolute left-[161px] top-[708px] h-[60px] w-[116px] border-[5px] border-[#ff6a0f]" />
      <svg className="absolute left-[280px] top-[728px] h-[30px] w-[170px]" viewBox="322 762 170 30">
        <path d="M323 777.500L347.500 764.500L348.300 774.500L485.500 770.700V775.400L348.500 779.300L349 789.500Z" fill="#ff6a0f" />
      </svg>
    </>
  );
}

export default function App() {
  return (
    <div className="h-[852px] w-[1108px] overflow-hidden bg-white pl-[42px] pt-[34px]">
      <div className="rounded-[5px] shadow-[0_0_0_1px_rgba(0,0,0,0.2),0_14px_32px_rgba(0,0,0,0.33)] h-[768px] w-[1024px]">
        <div className="relative flex h-[768px] w-[1024px] flex-col overflow-hidden rounded-[5px]">
          <TabStrip />
          <AddressBar />
          <Header />
          <Toolbar />
          <main className="flex grow items-start bg-[#394149] pl-[15px] pt-[16px] shadow-[inset_0_5px_8px_-2px_rgba(0,0,0,0.3)]">
            <div className="relative h-[521px] w-[930px] overflow-hidden rounded-[2px]">
              <CityMap />
              <ZoomControls />
              <SearchAndShare />
              <Legend />
              <Timeline />
              <Attribution />
              <BottomButtons />
              <OptionsPanel />
            </div>
          </main>
          <SidePanel />
          <Annotation />
        </div>
      </div>
    </div>
  );
}
